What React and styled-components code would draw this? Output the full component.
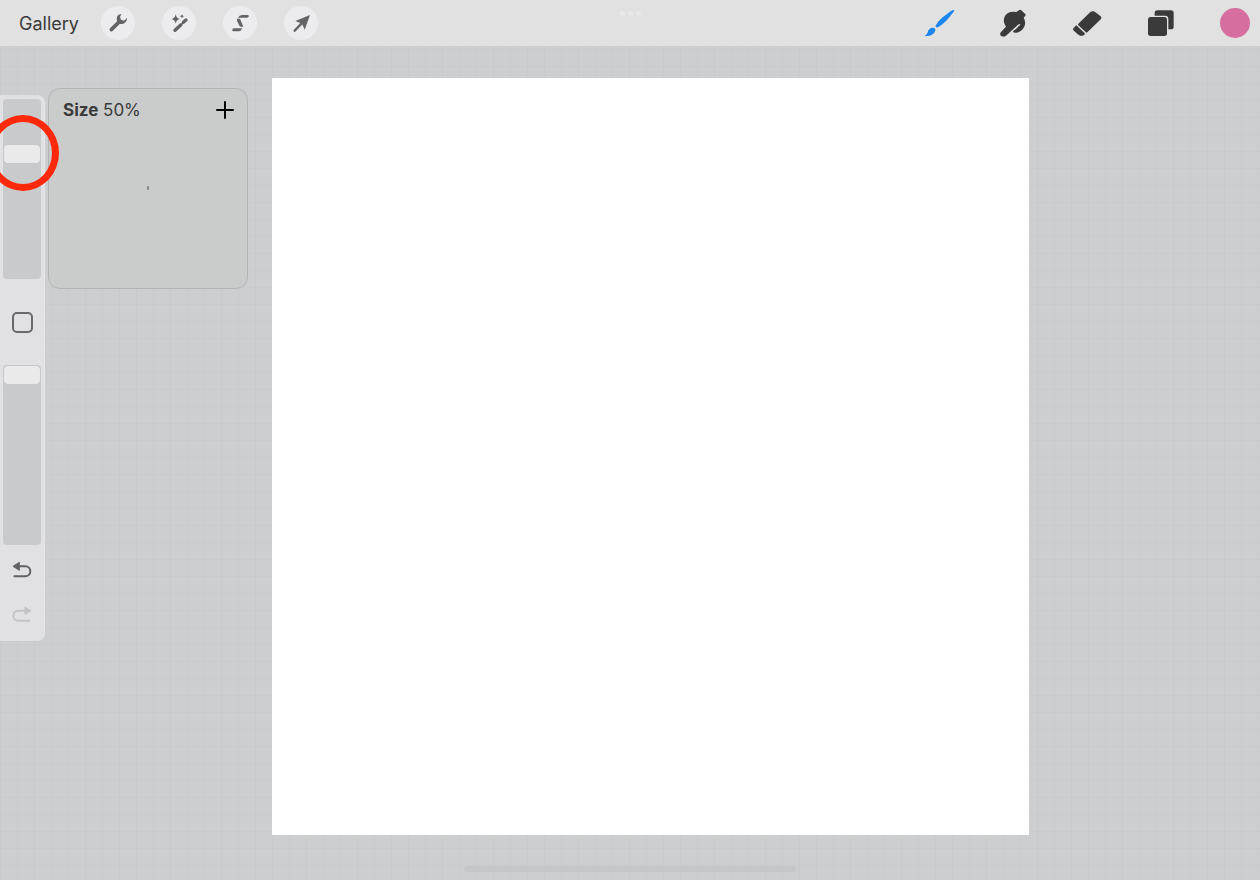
import React, { useState } from "react";
import styled, { createGlobalStyle, css } from "styled-components";

const GlobalStyle = createGlobalStyle`
  *, *::before, *::after { box-sizing: border-box; }
  body {
    margin: 0;
    font-family: Inter, "Liberation Sans", sans-serif;
    color: #3a3a3a;
    background: #cdced0;
  }
  button { font: inherit; color: inherit; border: 0; padding: 0; background: none; cursor: pointer; }
`;

const Studio = styled.div`
  min-height: 100vh;
  display: flex;
  flex-direction: column;
  overflow: hidden;
  background-color: #cdced0;
  background-image:
    linear-gradient(to right, #c9cacc 1px, transparent 1px),
    linear-gradient(to bottom, #c9cacc 1px, transparent 1px);
  background-size: 17px 17px;
  background-position: 0 15px;
`;

const TopBar = styled.header`
  display: grid;
  grid-template-columns: 1fr auto 1fr;
  height: 46px;
  background: #e1e1e1;
`;

const MenuGroup = styled.nav`
  display: flex;
  align-items: center;
  gap: 27px;
`;

const GalleryButton = styled.button`
  width: 74px;
  padding: 2px 0 0 19px;
  text-align: left;
  font-size: 18px;
  line-height: 24px;
  white-space: nowrap;
`;

const RoundButton = styled.button`
  width: 34px;
  height: 34px;
  border-radius: 50%;
  background: #ececee;
  color: #646466;
`;

const MultitaskDots = styled.div`
  display: flex;
  gap: 3px;
  padding-top: 11px;
`;

const Dot = styled.span`
  width: 5px;
  height: 5px;
  border-radius: 50%;
  background: #e9e9e9;
`;

const ToolGroup = styled.nav`
  display: flex;
  align-items: center;
  justify-content: flex-end;
  gap: 42px;
  padding-right: 9px;
`;

const ToolButton = styled.button`
  display: grid;
  place-items: center;
  width: 32px;
  height: 32px;
  color: ${(p) => (p.$active ? "#1b86f0" : "#3a3a3a")};
`;

const Swatch = styled.span`
  width: 30px;
  height: 30px;
  border-radius: 50%;
  background: #d66fa0;
`;

const Icon = styled.svg`
  display: block;
  width: 100%;
  height: 100%;
  fill: currentColor;
`;

const Workspace = styled.main`
  display: grid;
  grid-template-columns: 272px 1fr 231px;
  align-items: start;
  padding-top: 32px;
`;

const Controls = styled.aside`
  display: flex;
  align-items: flex-start;
  gap: 3px;
  padding-top: 10px;
`;

const Rail = styled.div`
  display: flex;
  flex-direction: column;
  align-items: center;
  width: 45px;
  margin-top: 7px;
  padding: 4px 3px 6px 3px;
  border-right: 1px solid #e6e6e8;
  border-radius: 0 8px 8px 0;
  background: #e1e1e3;
`;

const SliderBox = styled.div`
  position: relative;
  width: 38px;
  height: 180px;
`;

const thumb = css`
  appearance: none;
  width: 36px;
  height: 18px;
  border: 0;
  border-radius: 4px;
  background: #eaeaeb;
  box-shadow: 0 0 1px #b4b4b6;
`;

const Slider = styled.input`
  appearance: none;
  writing-mode: vertical-lr;
  direction: rtl;
  display: block;
  width: 38px;
  height: 180px;
  margin: 0;
  padding: 1px;
  border-radius: 4px;
  background: #c9cacc;
  &::-webkit-slider-thumb { ${thumb} }
  &::-moz-range-thumb { ${thumb} }
`;

const TouchRing = styled.span`
  position: absolute;
  top: 16px;
  left: -16px;
  width: 72px;
  height: 76px;
  border: 7px solid #fd290a;
  border-radius: 50%;
  pointer-events: none;
`;

const ModifyButton = styled.button`
  display: grid;
  place-items: center;
  width: 38px;
  height: 86px;
`;

const ModifySquare = styled.span`
  width: 21px;
  height: 21px;
  border: 2px solid #69696b;
  border-radius: 5px;
`;

const HistoryButton = styled.button`
  width: 38px;
  height: 38px;
  margin-top: 7px;
  color: ${(p) => (p.disabled ? "#c3c3c5" : "#626264")};
`;

const SizePanel = styled.section`
  width: 200px;
  height: 201px;
  display: flex;
  flex-direction: column;
  border: 1px solid #b2b3b4;
  border-radius: 12px;
  background: #cacbcb;
`;

const PanelHeader = styled.div`
  display: flex;
  justify-content: space-between;
  align-items: center;
  padding: 9px 12px 0 14px;
`;

const SizeLabel = styled.label`
  font-size: 17px;
  line-height: 24px;
`;

const AddButton = styled.button`
  width: 20px;
  height: 20px;
  color: #000;
`;

const Preview = styled.div`
  flex: 1;
  display: flex;
  justify-content: center;
  padding-top: 64px;
`;

const BrushDab = styled.span`
  width: 2px;
  height: 4px;
  border-radius: 1px;
  background: #858686;
`;

const Canvas = styled.div`
  aspect-ratio: 1;
  background: #fff;
`;

const BottomEdge = styled.footer`
  display: flex;
  justify-content: center;
  margin-top: auto;
  padding: 31px 0 8px;
`;

const HomeIndicator = styled.div`
  width: 332px;
  height: 6px;
  border-radius: 3px;
  background: #c5c6c8;
`;

const menuIcons = [
  {
    name: "Actions",
    art: (
      <>
        <path d="M31 71 L56 46" stroke="currentColor" strokeWidth="11" strokeLinecap="round" />
        <path d="M61 24 C50 24 44 35 49 46 L56 53 C67 57 78 49 78 36 L69 44 L60 41 L57 33 Z" />
      </>
    ),
  },
  {
    name: "Adjustments",
    art: (
      <>
        <path d="M39 73 L57 56 M64 49 L72 42" stroke="currentColor" strokeWidth="10" strokeLinecap="round" />
        <path d="M41 25 Q43 37 54 39 Q43 41 41 53 Q39 41 28 39 Q39 37 41 25 Z" />
        <path d="M60 25 Q61 30 66 31 Q61 32 60 37 Q59 32 54 31 Q59 30 60 25 Z" />
      </>
    ),
  },
  {
    name: "Selection",
    art: (
      <>
        <path d="M45 35 Q49 27 57 27 H74 Q78 27 77 31 Q76 35 72 35 Z" />
        <path d="M42 38 H51 L61 62 H53 Q50 62 48 57 L42 44 Z" />
        <path d="M58 67 Q54 76 46 76 H31 Q27 76 28 71 Q29 67 33 67 Z" />
      </>
    ),
  },
  {
    name: "Transform",
    art: (
      <>
        <path d="M32 74 L56 49" stroke="currentColor" strokeWidth="7" strokeLinecap="round" />
        <path d="M78 27 L62 71 L54 53 L34 45 Z" />
      </>
    ),
  },
];

const tools = [
  {
    name: "Paint",
    art: (
      <>
        <path d="M93 9 Q95 10 91 16 L70 41 Q57 54 42 62 L37 57 Q44 43 59 31 L83 13 Q89 9 93 9 Z" />
        <path d="M33 63 Q38 64 37 70 C35 81 23 89 7 87 Q4 86 7 85 Q13 82 14 76 C16 66 25 61 33 63 Z" />
      </>
    ),
  },
  {
    name: "Smudge",
    art: (
      <path d="M67 9 Q69 7 72 9 L84 20 Q87 23 85 26 L80 32 Q87 44 83 56 C79 67 69 75 58 77 Q50 78 48 74 Q48 71 54 68 C62 64 63 56 70 54 Q69 49 63 53 L27 86 C20 92 7 88 10 78 Q13 73 27 59 C16 44 19 26 34 17 Q45 12 58 15 Z" />
    ),
  },
  {
    name: "Erase",
    art: (
      <>
        <path d="M22 50 L58 15 Q62 12 68 13 Q72 14 89 28 Q93 32 90 36 L49 76 Q46 78 43 74 L22 55 Q20 53 22 50 Z" />
        <path d="M16 55 L41 79 Q43 81 40 83 Q34 88 27 86 Q22 84 7 70 Q5 67 7 64 Z" />
      </>
    ),
  },
  {
    name: "Layers",
    art: (
      <>
        <path d="M29 26 V18 Q29 10 37 10 H78 Q86 10 86 18 V59 Q86 67 78 67 H70 V36 Q70 26 60 26 Z" />
        <rect x="9" y="30" width="57" height="57" rx="8" />
      </>
    ),
  },
];

export default function App() {
  const [tool, setTool] = useState("Paint");
  const [size, setSize] = useState(72);
  const [opacity, setOpacity] = useState(100);

  return (
    <>
      <GlobalStyle />
      <Studio>
        <TopBar>
          <MenuGroup aria-label="Menus">
            <GalleryButton>Gallery</GalleryButton>
            {menuIcons.map(({ name, art }) => (
              <RoundButton key={name} aria-label={name}>
                <Icon viewBox="0 0 102 102" aria-hidden="true">{art}</Icon>
              </RoundButton>
            ))}
          </MenuGroup>
          <MultitaskDots>
            <Dot />
            <Dot />
            <Dot />
          </MultitaskDots>
          <ToolGroup aria-label="Tools">
            {tools.map(({ name, art }) => (
              <ToolButton key={name} aria-label={name} $active={tool === name} onClick={() => setTool(name)}>
                <Icon viewBox="0 0 96 96" aria-hidden="true">{art}</Icon>
              </ToolButton>
            ))}
            <ToolButton aria-label="Color">
              <Swatch />
            </ToolButton>
          </ToolGroup>
        </TopBar>

        <Workspace>
          <Controls>
            <Rail>
              <SliderBox>
                <Slider id="brush-size" type="range" value={size} onChange={(e) => setSize(+e.target.value)} />
                <TouchRing />
              </SliderBox>
              <ModifyButton aria-label="Modify">
                <ModifySquare />
              </ModifyButton>
              <SliderBox>
                <Slider type="range" aria-label="Opacity" value={opacity} onChange={(e) => setOpacity(+e.target.value)} />
              </SliderBox>
              <HistoryButton aria-label="Undo">
                <Icon viewBox="0 0 114 114" aria-hidden="true">
                  <path d="M30 43 L49 31 V55 Z" stroke="currentColor" strokeWidth="3" strokeLinejoin="round" />
                  <path d="M46 43 H67 A15 15 0 0 1 67 73 H34" fill="none" stroke="currentColor" strokeWidth="6" strokeLinecap="round" />
                </Icon>
              </HistoryButton>
              <HistoryButton aria-label="Redo" disabled>
                <Icon viewBox="0 0 114 114" aria-hidden="true">
                  <path d="M84 41 L66 30 V52 Z" stroke="currentColor" strokeWidth="3" strokeLinejoin="round" />
                  <path d="M68 41 H46 A15 15 0 0 0 46 71 H79" fill="none" stroke="currentColor" strokeWidth="6" strokeLinecap="round" />
                </Icon>
              </HistoryButton>
            </Rail>
            <SizePanel>
              <PanelHeader>
                <SizeLabel htmlFor="brush-size">
                  <b>Size</b> 50%
                </SizeLabel>
                <AddButton aria-label="Save size">
                  <Icon viewBox="0 0 20 20" aria-hidden="true">
                    <path d="M10 2 V18 M2 10 H18" stroke="currentColor" strokeWidth="2" strokeLinecap="round" />
                  </Icon>
                </AddButton>
              </PanelHeader>
              <Preview>
                <BrushDab />
              </Preview>
            </SizePanel>
          </Controls>
          <Canvas />
        </Workspace>

        <BottomEdge>
          <HomeIndicator />
        </BottomEdge>
      </Studio>
    </>
  );
}
